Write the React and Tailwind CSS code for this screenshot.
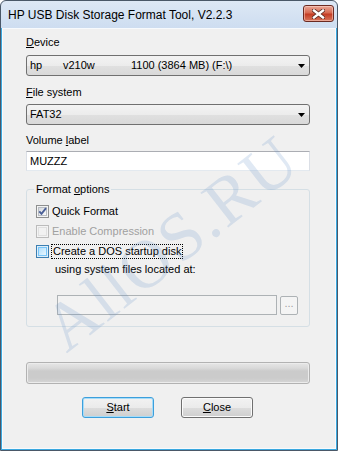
import React from 'react';

function Combo({ children }) {
  return (
    <div className="flex h-[21px] items-center rounded-[3px] border border-[#707070] bg-[linear-gradient(#f3f3f3_0%,#ececec_50%,#e0e0e0_51%,#d9d9d9_100%)] pl-[3px] pr-[4px]">
      <div className="flex flex-1 items-center whitespace-nowrap">{children}</div>
      <svg width="7" height="4" viewBox="0 0 7 4">
        <path d="M0 0H7L3.5 4Z" fill="#000" />
      </svg>
    </div>
  );
}

function CheckBox({ state }) {
  if (state === 'disabled') {
    return (
      <div className="flex h-[13px] w-[13px] items-center justify-center border border-[#bcbcbc] bg-[#f4f4f4]">
        <div className="h-[9px] w-[9px] border border-[#e0e0e0] bg-[#f2f2f2]" />
      </div>
    );
  }
  if (state === 'hover') {
    return (
      <div className="flex h-[13px] w-[13px] items-center justify-center border border-[#3c7fb1] bg-[#deeefa]">
        <div className="h-[9px] w-[9px] border border-[#79c6f9] bg-[linear-gradient(135deg,#b1dffd,#e9f7fe)]" />
      </div>
    );
  }
  return (
    <div className="relative flex h-[13px] w-[13px] items-center justify-center border border-[#8e8f8f] bg-[#f4f4f4]">
      <div className="h-[9px] w-[9px] border border-[#b9bdc3] bg-[linear-gradient(135deg,#d6d9de,#fbfbfb)]" />
      {state === 'checked' && (
        <svg className="absolute left-0 top-0" width="11" height="11" viewBox="0 0 11 11">
          <path d="M2.3 5.4L4.5 7.8L9 2.2" fill="none" stroke="#4a5f97" strokeWidth="1.9" />
        </svg>
      )}
    </div>
  );
}

function Button({ children, isDefault }) {
  return (
    <div
      className={
        'flex h-[21px] w-[72px] items-center justify-center rounded-[3px] border bg-[linear-gradient(#f2f2f2_0%,#ebebeb_50%,#dddddd_51%,#cfcfcf_100%)] ' +
        (isDefault ? 'border-[#3c9fdc] shadow-[inset_0_0_0_1px_#a6dcf8]' : 'border-[#707070] shadow-[inset_0_0_0_1px_#fbfbfb]')
      }
    >
      {children}
    </div>
  );
}

export default function App() {
  return (
    <div className="relative flex h-[451px] w-[338px] flex-col overflow-hidden rounded-t-[6px] border border-[#4a5868] bg-[linear-gradient(#dde8f5,#c6d8ee_40px)] font-['Liberation_Sans',Arial,sans-serif] text-[11px] leading-[13px] text-black">
      {/* title bar */}
      <div className="flex h-[27px] shrink-0 items-start justify-between pl-[7px] pr-[3px]">
        <div className="pt-[7px] text-[12px] leading-[14px]">HP USB Disk Storage Format Tool, V2.2.3</div>
        <div className="mt-[4px] flex h-[17px] w-[31px] items-center justify-center rounded-[3px] border border-[#6b2a22] bg-[linear-gradient(#e9a898_0%,#d76a52_45%,#c43c24_55%,#d8765c_100%)] shadow-[inset_0_0_0_1px_rgba(255,220,210,0.5)]">
          <svg width="13" height="10" viewBox="0 0 13 10">
            <path d="M2 1.5L11 8.5M11 1.5L2 8.5" stroke="#5a2a22" strokeWidth="4" strokeLinecap="square" />
            <path d="M2 1.5L11 8.5M11 1.5L2 8.5" stroke="#ffffff" strokeWidth="2.4" strokeLinecap="square" />
          </svg>
        </div>
      </div>

      {/* client */}
      <div className="flex flex-1 flex-col border-x border-b border-[#3aa8df]">
        <div className="flex flex-1 flex-col border border-[#f7fafd] bg-[#f0f0f0] pl-[23px]">
          <div className="flex w-[284px] flex-col">
            <div className="mt-[7px]">
              <span className="underline">D</span>evice
            </div>
            <div className="mt-[6px]">
              <Combo>
                <span className="w-[33px]">hp</span>
                <span className="w-[68px]">v210w</span>
                <span>1100 (3864 MB) (F:\)</span>
              </Combo>
            </div>

            <div className="mt-[10px]">
              <span className="underline">F</span>ile system
            </div>
            <div className="mt-[5px]">
              <Combo>FAT32</Combo>
            </div>

            <div className="mt-[9px]">
              Volume <span className="underline">l</span>abel
            </div>
            <div className="mt-[4px] flex h-[20px] items-center border border-[#abadb3] border-x-[#dbdfe6] border-b-[#e3e9ef] bg-white pl-[3px]">
              MUZZZ
            </div>

            {/* group box */}
            <div className="relative mt-[18px] flex flex-col rounded-[3px] border border-[#d5dfe5] pb-[11px] pl-[9px] pt-[15px]">
              <span className="absolute left-[7px] top-[-7px] bg-[#f0f0f0] px-[2px]">
                Format <span className="underline">o</span>ptions
              </span>
              <div className="flex items-center gap-[3px]">
                <CheckBox state="checked" />
                <span>Quick Format</span>
              </div>
              <div className="mt-[7px] flex items-center gap-[3px]">
                <CheckBox state="disabled" />
                <span className="text-[#a0a0a0]">Enable Compression</span>
              </div>
              <div className="mt-[6px] flex items-center gap-[2px]">
                <CheckBox state="hover" />
                <span className="border border-dotted border-black px-[1px]">Create a DOS startup disk</span>
              </div>
              <div className="mt-[4px] pl-[19px]">using system files located at:</div>
              <div className="mt-[19px] flex items-center gap-[3px] pl-[21px]">
                <div className="h-[20px] w-[220px] border border-[#adb2b5] bg-[#f2f2f2]" />
                <div className="flex h-[19px] w-[18px] items-center justify-center rounded-[2px] border border-[#adb2b5] bg-[#f4f4f4] pb-[4px] text-[#a0a0a0]">
                  ...
                </div>
              </div>
            </div>

            {/* progress bar */}
            <div className="mt-[35px] h-[22px] rounded-[3px] border border-[#b2b2b2] bg-[linear-gradient(#e6e6e6_0%,#dadada_25%,#cbcbcb_40%,#cbcbcb_75%,#d6d6d6_100%)] shadow-[inset_0_0_0_1px_#ececec]" />

            <div className="mt-[13px] flex gap-[27px] pl-[56px]">
              <Button isDefault>
                <span>
                  <span className="underline">S</span>tart
                </span>
              </Button>
              <Button>
                <span>
                  <span className="underline">C</span>lose
                </span>
              </Button>
            </div>
          </div>
        </div>
      </div>

      {/* watermark */}
      <div className="pointer-events-none absolute left-[170px] top-[242px] -translate-x-1/2 -translate-y-1/2 -rotate-[38deg] whitespace-nowrap font-['Liberation_Serif',serif] text-[68px] leading-none tracking-[2px] text-[rgba(100,145,200,0.2)]">
        AllOS.RU
      </div>
    </div>
  );
}
